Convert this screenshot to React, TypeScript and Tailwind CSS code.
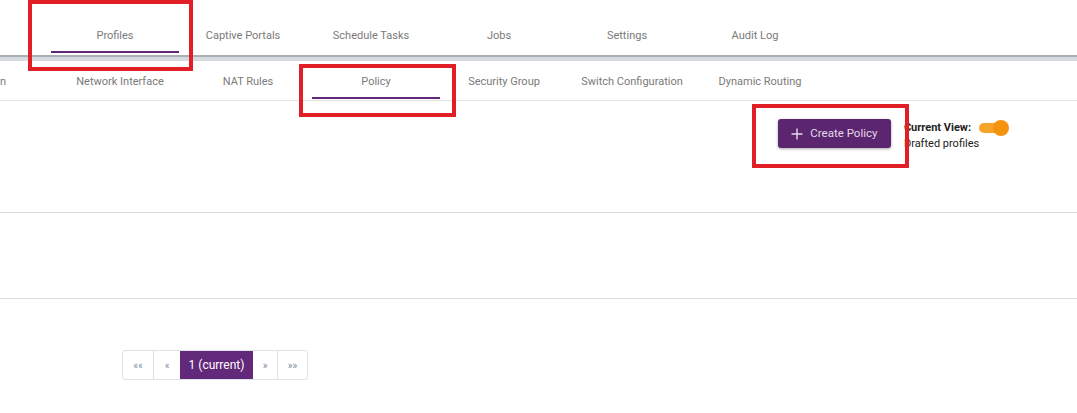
import React from "react";

const topTabs = ["Profiles", "Captive Portals", "Schedule Tasks", "Jobs", "Settings", "Audit Log"];
const subTabs = [
  "Network Interface",
  "NAT Rules",
  "Policy",
  "Security Group",
  "Switch Configuration",
  "Dynamic Routing",
];

const App: React.FC = () => {
  return (
    <div className="relative h-[413px] w-full overflow-hidden bg-white font-['Roboto',sans-serif] text-[11px]">
      {/* main tabs */}
      <div className="flex h-[55px] pl-[51px]">
        {topTabs.map((t) => (
          <div key={t} className="relative flex w-[128px] items-center justify-center pt-[17px] text-[#7a7a7a]">
            {t}
            {t === "Profiles" && (
              <div className="absolute bottom-[2px] left-0 h-[2px] w-full bg-[#5f2878]"></div>
            )}
          </div>
        ))}
      </div>
      <div className="h-[6px] border-t-2 border-[#a9aeb3] bg-[#d5dbe0]"></div>

      {/* sub tabs */}
      <div className="flex h-[40px] border-b border-[#e2e2e2]">
        <div className="-ml-[72px] flex">
          <div className="flex w-[128px] items-center justify-end pr-[50px] pt-[4px] text-[#7a7a7a]">
            Configuration
          </div>
          {subTabs.map((t) => (
            <div key={t} className="relative flex w-[128px] items-center justify-center pt-[4px] text-[#7a7a7a]">
              {t}
              {t === "Policy" && (
                <div className="absolute bottom-[1px] left-0 h-[2px] w-full bg-[#5f2878]"></div>
              )}
            </div>
          ))}
        </div>
      </div>

      {/* toolbar row */}
      <div className="flex h-[112px] items-start border-b border-[#dcdcdc] pr-[68px] pt-[18px]">
        <button className="ml-auto flex h-[29px] w-[113px] items-center justify-center gap-[7px] rounded-[3px] bg-[#5c2570] text-[11.5px] text-[#e4d9ea] shadow-[0_1px_3px_rgba(0,0,0,0.35)]">
          <svg width="12" height="12" viewBox="0 0 12 12" fill="none" stroke="#e4d9ea" strokeWidth="1.4">
            <path d="M6 0.5v11M0.5 6h11" />
          </svg>
          Create Policy
        </button>
        <div className="ml-[13px] flex flex-col pt-[1px] leading-[16px] text-[#222]">
          <div className="flex items-center gap-[8px]">
            <span className="font-bold">Current View:</span>
            <span className="relative inline-block h-[16px] w-[30px]">
              <span className="absolute left-0 top-[3px] h-[10px] w-[24px] rounded-full bg-[#f6a32a]"></span>
              <span className="absolute right-0 top-0 h-[16px] w-[16px] rounded-full bg-[#f5930f]"></span>
            </span>
          </div>
          <span>Drafted profiles</span>
        </div>
      </div>

      {/* empty row */}
      <div className="h-[86px] border-b border-[#dcdcdc]"></div>

      {/* pagination */}
      <div className="pl-[122px] pt-[51px]">
        <div className="flex h-[30px] w-fit overflow-hidden rounded-[3px] border border-[#dee2e6] text-[10px] text-[#7b8da3]">
          <div className="flex w-[31px] items-center justify-center border-r border-[#dee2e6]">««</div>
          <div className="flex w-[26px] items-center justify-center">«</div>
          <div className="flex w-[73px] items-center justify-center bg-[#62287a] text-[12px] text-white">1 (current)</div>
          <div className="flex w-[25px] items-center justify-center border-r border-[#dee2e6]">»</div>
          <div className="flex w-[29px] items-center justify-center">»»</div>
        </div>
      </div>

      {/* annotation boxes */}
      <div className="absolute left-[28px] top-0 h-[71px] w-[165px] border-4 border-[#e21f26]"></div>
      <div className="absolute left-[299px] top-[64px] h-[53px] w-[157px] border-4 border-[#e21f26]"></div>
      <div className="absolute left-[752px] top-[104px] h-[64px] w-[157px] border-4 border-[#e21f26]"></div>
    </div>
  );
};

export default App;
